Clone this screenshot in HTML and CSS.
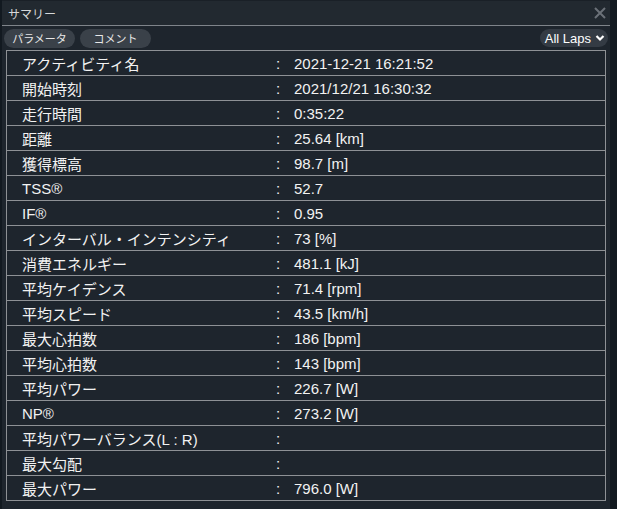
FILE: index.html
```html
<!DOCTYPE html>
<html lang="ja">
<head>
    <meta charset="UTF-8">
    <title>サマリー</title>
    <link rel="stylesheet" href="styles.css">
</head>
<body>
    <div class="panel">
        <div class="title-bar">
            <span class="title">サマリー</span>
            <span class="close">
                <svg width="12" height="12" viewBox="0 0 12 12"><path d="M1 1L11 11M11 1L1 11" stroke="#6b7178" stroke-width="2"/></svg>
            </span>
        </div>
        <div class="toolbar">
            <div class="tabs">
                <span class="tab">パラメータ</span>
                <span class="tab">コメント</span>
            </div>
            <div class="laps">
                All Laps
                <svg width="10" height="8" viewBox="0 0 10 8"><path d="M1.5 2L5 5.5L8.5 2" fill="none" stroke="#fff" stroke-width="2.2"/></svg>
            </div>
        </div>
        <div class="summary">
            <div class="row"><span class="label">アクティビティ名</span><span class="sep">:</span><span class="value">2021-12-21 16:21:52</span></div>
            <div class="row"><span class="label">開始時刻</span><span class="sep">:</span><span class="value">2021/12/21 16:30:32</span></div>
            <div class="row"><span class="label">走行時間</span><span class="sep">:</span><span class="value">0:35:22</span></div>
            <div class="row"><span class="label">距離</span><span class="sep">:</span><span class="value">25.64 [km]</span></div>
            <div class="row"><span class="label">獲得標高</span><span class="sep">:</span><span class="value">98.7 [m]</span></div>
            <div class="row"><span class="label">TSS®</span><span class="sep">:</span><span class="value">52.7</span></div>
            <div class="row"><span class="label">IF®</span><span class="sep">:</span><span class="value">0.95</span></div>
            <div class="row"><span class="label">インターバル・インテンシティ</span><span class="sep">:</span><span class="value">73 [%]</span></div>
            <div class="row"><span class="label">消費エネルギー</span><span class="sep">:</span><span class="value">481.1 [kJ]</span></div>
            <div class="row"><span class="label">平均ケイデンス</span><span class="sep">:</span><span class="value">71.4 [rpm]</span></div>
            <div class="row"><span class="label">平均スピード</span><span class="sep">:</span><span class="value">43.5 [km/h]</span></div>
            <div class="row"><span class="label">最大心拍数</span><span class="sep">:</span><span class="value">186 [bpm]</span></div>
            <div class="row"><span class="label">平均心拍数</span><span class="sep">:</span><span class="value">143 [bpm]</span></div>
            <div class="row"><span class="label">平均パワー</span><span class="sep">:</span><span class="value">226.7 [W]</span></div>
            <div class="row"><span class="label">NP®</span><span class="sep">:</span><span class="value">273.2 [W]</span></div>
            <div class="row"><span class="label">平均パワーバランス(L : R)</span><span class="sep">:</span><span class="value"></span></div>
            <div class="row"><span class="label">最大勾配</span><span class="sep">:</span><span class="value"></span></div>
            <div class="row"><span class="label">最大パワー</span><span class="sep">:</span><span class="value">796.0 [W]</span></div>
        </div>
    </div>
</body>
</html>
```

FILE: styles.css
```css
/* ページ全体 */
body {
    margin: 0;
    background: #121920;
    font-family: "Liberation Sans", "Noto Sans CJK JP", sans-serif;
    color: #f2f2f2;
}

/* サマリーパネル */
.panel {
    margin-left: 2px;
    width: 608px;
    height: 509px;
    background: #1e252d;
}

.title-bar {
    height: 24px;
    border-top: 1px solid #1a2027;
    border-bottom: 1px solid #7f848a;
    background: #222930;
    display: flex;
    align-items: center;
    justify-content: space-between;
    padding: 0 4px 0 6px;
}
.title {
    font-size: 12px;
    color: #d6d8da;
}
.close {
    display: flex;
}

/* タブとラップ選択 */
.toolbar {
    height: 24px;
    display: flex;
    align-items: center;
    justify-content: space-between;
    padding: 0 2px 0 2px;
}
.tabs {
    display: flex;
    gap: 5px;
}
.tab {
    width: 71px;
    height: 19px;
    border-radius: 10px;
    background: #3a4149;
    font-size: 11px;
    color: #e8e8e8;
    display: flex;
    align-items: center;
    justify-content: center;
}
.laps {
    height: 18px;
    padding: 0 3px 0 5px;
    border-radius: 9px;
    background: #343b44;
    font-size: 13px;
    color: #fff;
    display: flex;
    align-items: center;
    gap: 4px;
}

/* 表 */
.summary {
    margin-left: 4px;
    width: 598px;
    border: 1px solid #8e9195;
    border-bottom: none;
}
.row {
    display: grid;
    grid-template-columns: 268px 19px 1fr;
    height: 24px;
    border-bottom: 1px solid #8e9195;
    align-items: center;
    font-size: 15px;
}
.label {
    padding-left: 15px;
}
.sep {
    padding-left: 1px;
}
```
